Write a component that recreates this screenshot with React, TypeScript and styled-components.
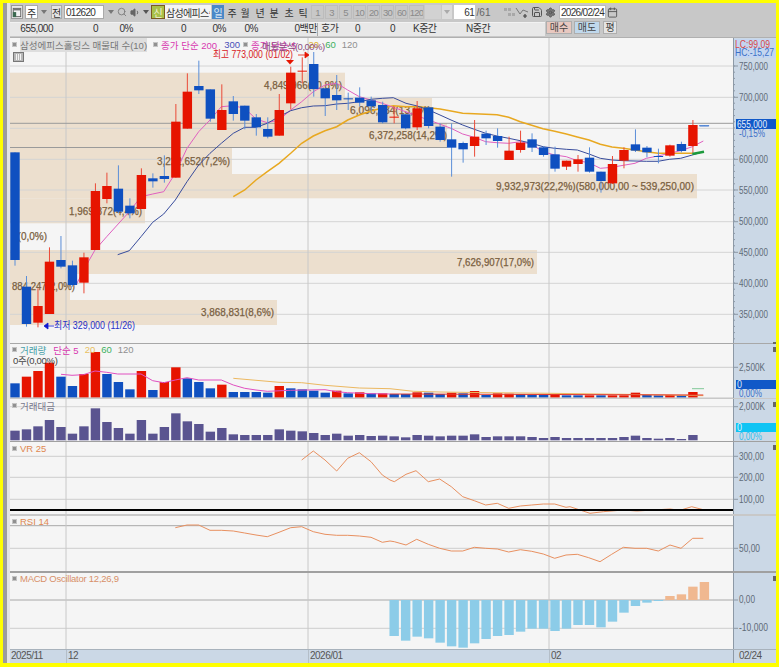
import React from 'react';
import styled, { createGlobalStyle } from 'styled-components';
import { Search, Volume1, Save, Settings, Calendar } from 'lucide-react';

const KR = '"Liberation Sans", "Noto Sans CJK KR", sans-serif';
const RED = '#e61400';
const BLUE = '#0f50c0';
const STEP = 11.49;
const cx = (i: number) => 15 + STEP * i;

type P = [number, number];
// coordinates were read from 3x crops: origin + value / 3
const pts = (ox: number, oy: number, list: P[]) =>
  list.map(([x, y]) => `${(ox + x / 3).toFixed(1)},${(oy + y / 3).toFixed(1)}`).join(' ');

// bodyTop, bodyBottom, wickTop, wickBottom (crop units, y origin 40), up
const candles: [number, number, number, number, number][] = [
  [337, 660, 337, 677, 0], [740, 852, 708, 860, 0], [798, 848, 745, 862, 1], [665, 822, 622, 822, 1],
  [660, 680, 588, 685, 0], [676, 735, 662, 740, 0], [652, 728, 638, 760, 1], [453, 630, 430, 630, 1],
  [438, 477, 398, 490, 1], [446, 515, 376, 520, 0], [497, 520, 475, 535, 0], [405, 507, 385, 507, 1],
  [415, 424, 400, 443, 0], [408, 417, 346, 428, 0], [245, 413, 192, 413, 1], [155, 266, 100, 266, 1],
  [138, 151, 62, 162, 0], [148, 236, 148, 245, 0], [210, 270, 133, 270, 1], [184, 222, 168, 242, 0],
  [197, 242, 197, 268, 0], [232, 262, 222, 287, 0], [267, 290, 232, 295, 0], [210, 287, 162, 287, 1],
  [98, 190, 80, 208, 1], [92, 95, 52, 130, 1], [72, 147, 36, 170, 0], [145, 175, 145, 228, 0],
  [165, 181, 105, 210, 0], [175, 178, 158, 210, 0], [173, 188, 142, 200, 0], [181, 199, 170, 215, 0],
  [195, 247, 185, 250, 0], [230, 233, 200, 250, 1], [223, 265, 223, 268, 0], [205, 262, 183, 270, 1],
  [202, 258, 200, 265, 0], [260, 300, 250, 305, 0], [298, 323, 250, 410, 0], [309, 328, 305, 368, 0],
  [290, 318, 240, 350, 1], [281, 295, 272, 315, 0], [288, 303, 265, 323, 0], [332, 360, 290, 360, 1],
  [308, 330, 272, 338, 1], [298, 323, 280, 336, 0], [322, 345, 318, 350, 0], [343, 386, 320, 395, 0],
  [362, 380, 362, 390, 1], [358, 372, 345, 395, 1], [353, 395, 322, 398, 0], [395, 423, 395, 458, 0],
  [372, 430, 348, 432, 1], [330, 362, 322, 385, 1], [313, 332, 268, 336, 0], [323, 337, 318, 352, 0],
  [348, 351, 326, 370, 0], [316, 347, 314, 350, 1], [312, 333, 305, 337, 0], [255, 318, 240, 340, 1],
  [256, 258, 256, 258, 0],
];

const ma5 =
  pts(0, 40, [[228, 735], [268, 660], [285, 630], [320, 590], [388, 515], [423, 470], [458, 462], [491, 455], [526, 400], [561, 325], [596, 275], [630, 240], [664, 200], [700, 197], [734, 205], [768, 237], [802, 248], [837, 240], [872, 210], [905, 185], [940, 155], [975, 135], [1010, 130], [1043, 150], [1078, 170], [1113, 180], [1147, 190]]) +
  ' ' +
  pts(380, 40, [[160, 245], [213, 265], [248, 282], [283, 292], [317, 305], [351, 308], [386, 310], [421, 305], [455, 313], [489, 335], [524, 345], [559, 350], [592, 362], [627, 368], [661, 385], [696, 382], [730, 376], [765, 370], [799, 355], [834, 348], [868, 340], [902, 332], [937, 320], [970, 303]]);

const ma20 =
  pts(0, 40, [[353, 644], [388, 632], [423, 590], [458, 547], [491, 522], [526, 480], [561, 425], [596, 375], [630, 340], [664, 310], [700, 280], [734, 262], [768, 262], [802, 250], [837, 230], [872, 212], [905, 203], [940, 198], [975, 197], [1010, 192], [1043, 190], [1078, 185], [1113, 178], [1147, 175]]) +
  ' ' +
  pts(380, 40, [[40, 173], [78, 190], [112, 198], [146, 210], [180, 225], [213, 240], [248, 255], [283, 268], [317, 280], [351, 288], [386, 295], [421, 302], [455, 310], [489, 320], [524, 325], [559, 328], [592, 330], [627, 342], [661, 355], [696, 360], [730, 362], [765, 363], [799, 364], [834, 364], [868, 358], [902, 355], [937, 345], [970, 335]]);

const ma60 =
  pts(0, 40, [[700, 470], [734, 450], [768, 420], [802, 395], [837, 370], [872, 340], [905, 310], [940, 288], [975, 272], [1010, 260], [1043, 240], [1078, 225], [1113, 213], [1147, 204]]) +
  ' ' +
  pts(380, 40, [[40, 197], [78, 200], [112, 200], [146, 203], [180, 207], [213, 213], [248, 220], [283, 221], [317, 223], [351, 224], [386, 232], [421, 245], [455, 256], [489, 266], [524, 274], [559, 282], [592, 291], [627, 300], [661, 313], [696, 321], [730, 325], [765, 330], [799, 335], [834, 340], [868, 340], [937, 340]]);

// y0, y1, right edge of each price bucket
const buckets: [number, number, number][] = [
  [72.7, 98, 345], [98, 123, 432], [123, 147.5, 447], [147.5, 174, 232], [174, 198.3, 697],
  [198.3, 223.3, 145], [250, 274, 537], [274, 300, 70], [300, 325, 277],
];

// text, left, right, baseline
const bucketLabels: [string, number, number, number][] = [
  ['4,849,966(10,8%)', 264, 342, 89], ['6,096,884(13,6%)', 350, 431, 114], ['6,372,258(14,2%)', 369, 447, 139],
  ['3,222,652(7,2%)', 157, 230, 165], ['9,932,973(22,2%)(580,000,00 ~ 539,250,00)', 496, 694, 190],
  ['1,969,872(4,4%)', 69, 142, 215], ['0(0,0%)', 12, 47, 240], ['7,626,907(17,0%)', 457, 534, 266],
  ['884,247(2,0%)', 12, 75, 290], ['3,868,831(8,6%)', 201, 274, 316],
];

const volumeTops = [130, 110, 93, 68, 110, 138, 102, 36, 102, 126, 148, 93, 150, 126, 82, 115, 126, 145, 134, 156, 156, 156, 158, 138, 145, 148, 152, 158, 152, 160, 157, 160, 160, 162, 162, 157, 158, 162, 158, 160, 153, 165, 160, 161, 162, 164, 164, 162, 166, 166, 166, 166, 166, 166, 158, 165, 166, 165, 166, 156];
const volumeUp = [0, 1, 1, 1, 0, 0, 1, 1, 0, 0, 0, 1, 0, 1, 1, 0, 0, 0, 1, 0, 0, 0, 0, 1, 0, 0, 0, 0, 1, 0, 1, 0, 1, 0, 0, 1, 0, 0, 1, 0, 1, 0, 1, 1, 0, 0, 0, 1, 0, 0, 1, 0, 1, 1, 1, 0, 0, 1, 0, 1];
const amountTops = [272, 268, 259, 240, 261, 281, 259, 205, 246, 264, 281, 240, 281, 261, 220, 244, 252, 275, 264, 283, 285, 285, 285, 268, 272, 274, 279, 285, 281, 287, 285, 288, 287, 289, 292, 285, 287, 289, 287, 287, 283, 291, 289, 289, 289, 291, 294, 291, 294, 294, 294, 294, 294, 291, 287, 294, 296, 294, 297, 285];
const macdBottoms = [393, 407, 395, 400, 413, 424, 428, 415, 402, 393, 390, 380, 371, 371, 378, 371, 360, 360, 367, 350, 323, 303, 293, 288];
const macdTops = [273, 268, 245, 231];

const volMa5 = pts(0, 340, [[183, 103], [216, 106], [250, 104], [285, 93], [320, 97], [353, 102], [423, 102], [458, 122], [491, 128], [526, 120], [561, 113], [596, 120], [664, 120], [700, 135], [734, 145], [768, 150], [802, 154], [872, 151], [975, 149], [1010, 155], [1043, 158], [1113, 161], [1170, 162]]);
const volMa5Tail = pts(390, 340, [[0, 162], [300, 163], [940, 165]]);
const volMa20 =
  pts(0, 340, [[700, 115], [768, 121], [837, 127], [905, 128], [975, 136], [1078, 144]]) +
  ' ' +
  pts(390, 340, [[0, 146], [70, 154], [150, 156], [300, 158], [480, 160], [700, 163], [940, 167]]);

const vrLine =
  pts(0, 340, [[905, 360], [940, 333], [975, 360], [1010, 393], [1043, 355], [1078, 338], [1113, 365], [1147, 405], [1170, 420]]) +
  ' ' +
  pts(390, 340, [[13, 425], [48, 403], [78, 392], [115, 425], [149, 417], [184, 440], [218, 470], [253, 482], [287, 495], [322, 490], [356, 505], [391, 498], [425, 495], [460, 492], [494, 492], [528, 502]]) +
  ' ' +
  pts(390, 505, [[540, 5], [600, 25], [640, 20], [700, 15], [740, 18], [840, 12], [870, 16], [905, 5], [940, 14]]);

const rsiLine =
  pts(0, 505, [[526, 68], [561, 60], [596, 60], [630, 76], [664, 76], [700, 78], [734, 84], [768, 90], [802, 95], [837, 82], [872, 68], [905, 65], [940, 80], [975, 88], [1010, 91], [1043, 91], [1078, 93], [1113, 97], [1147, 112], [1170, 108]]) +
  ' ' +
  pts(390, 505, [[13, 110], [48, 120], [80, 103], [115, 118], [149, 130], [184, 138], [218, 138], [253, 127], [287, 130], [322, 132], [356, 141], [391, 134], [425, 139], [460, 147], [494, 160], [528, 150], [562, 148], [596, 158], [630, 170], [665, 148], [700, 127], [735, 130], [770, 130], [805, 138], [840, 120], [873, 130], [908, 100], [940, 100]]);

const GlobalStyle = createGlobalStyle`
  html, body { margin: 0; padding: 0; background: #ffff00; }
`;

const Frame = styled.div`
  width: 779px;
  height: 667px;
  box-sizing: border-box;
  border-style: solid;
  border-color: #ffff00;
  border-width: 3px 3px 4px 3px;
  display: flex;
  font-family: ${KR};
  overflow: hidden;
`;
const SideStrip = styled.div`
  width: 7px;
  background: linear-gradient(90deg, #9c9c9c 0 4px, #e4e4e4 4px);
`;
const Column = styled.div`
  flex: 1;
  display: flex;
  flex-direction: column;
  min-width: 0;
`;
const ToolRow = styled.div`
  height: 18px;
  display: flex;
  align-items: center;
  background: #c8c8c8;
  font-size: 10px;
  color: #333;
`;
const Tool = styled.div<{ $w: number; $ml?: number; $bg?: string; $color?: string; $line?: string }>`
  width: ${(p) => p.$w}px;
  margin-left: ${(p) => p.$ml ?? 0}px;
  height: 14px;
  flex: none;
  box-sizing: border-box;
  display: flex;
  align-items: center;
  justify-content: center;
  background: ${(p) => p.$bg ?? 'transparent'};
  color: ${(p) => p.$color ?? '#333'};
  border: ${(p) => (p.$line ? `1px solid ${p.$line}` : 'none')};
  white-space: nowrap;
  overflow: hidden;
`;
const Field = styled(Tool)<{ $end?: boolean }>`
  justify-content: ${(p) => (p.$end ? 'flex-end' : 'flex-start')};
  padding: 0 1px;
  letter-spacing: -0.7px;
`;
const Period = styled(Tool)`
  letter-spacing: -0.8px;
  font-size: 9.5px;
`;
const Arrow = styled.span<{ $c?: string }>`
  width: 0;
  height: 0;
  border-left: 3px solid transparent;
  border-right: 3px solid transparent;
  border-top: 4px solid ${(p) => p.$c ?? '#777'};
`;
const InfoRow = styled.div`
  height: 16px;
  display: flex;
  background: #c8c8c8;
  font-size: 10px;
  color: #333;
`;
const InfoCells = styled.div`
  width: 535px;
  height: 13px;
  margin-top: 0.5px;
  display: flex;
  background: #e8e8e8;
  border-top: 1px solid #f2f2f2;
`;
const Cell = styled.div<{ $w: number; $left?: boolean; $sep?: boolean; $pad?: number }>`
  width: ${(p) => p.$w}px;
  flex: none;
  box-sizing: border-box;
  line-height: 12px;
  text-align: ${(p) => (p.$left ? 'left' : 'right')};
  padding-left: ${(p) => p.$pad ?? (p.$left ? 3 : 0)}px;
  border-left: ${(p) => (p.$sep ? '1px solid #aaa' : 'none')};
  letter-spacing: -0.5px;
  white-space: nowrap;
`;
const TradeButton = styled.div<{ $bg: string; $w: number; $ml: number }>`
  width: ${(p) => p.$w}px;
  margin-left: ${(p) => p.$ml}px;
  height: 13px;
  background: ${(p) => p.$bg};
  border: 1px solid #aeaeae;
  box-sizing: border-box;
  font-size: 10px;
  line-height: 11px;
  text-align: center;
  color: #444;
`;
const Pane = styled.div<{ $h: number; $line: string; $lw: number }>`
  height: ${(p) => p.$h}px;
  flex: none;
  box-sizing: border-box;
  display: flex;
  border-top: ${(p) => p.$lw}px solid ${(p) => p.$line};
`;
const Plot = styled.div`
  width: 723px;
  flex: none;
  position: relative;
  background: #f5f5f5;
`;
const Axis = styled.div`
  width: 43px;
  flex: none;
  position: relative;
  background: #cbd8e6;
  border-left: 1px solid #8d99a6;
  box-sizing: border-box;
`;
const ChartSvg = styled.svg`
  display: block;
  width: 100%;
  height: 100%;
  text {
    font-family: ${KR};
    font-size: 10.5px;
  }
`;
const Legend = styled.div<{ $top: number }>`
  position: absolute;
  left: 2px;
  top: ${(p) => p.$top}px;
  height: 11px;
  display: flex;
  align-items: center;
  font-size: 9.5px;
  white-space: nowrap;
`;
const Dot = styled.i<{ $ml?: number }>`
  width: 5px;
  height: 5px;
  box-sizing: border-box;
  margin: 0 3px 0 ${(p) => p.$ml ?? 0}px;
  background: #909090;
  border: 1px solid #c4c4c4;
  flex: none;
`;
const Tag = styled.span<{ $c: string; $ml?: number; $bg?: string; $tight?: boolean }>`
  color: ${(p) => p.$c};
  margin-left: ${(p) => p.$ml ?? 0}px;
  background: ${(p) => p.$bg ?? 'transparent'};
  letter-spacing: ${(p) => (p.$tight ? '-0.25px' : '0')};
`;
const Overlap = styled.span`
  position: absolute;
  left: 250px;
  top: 0;
  font-size: 9.5px;
  color: #8a4f80;
  letter-spacing: -0.5px;
`;
const SubValue = styled.div`
  position: absolute;
  left: 3px;
  top: 9px;
  font-size: 9.5px;
  letter-spacing: -0.3px;
  color: #444;
`;
const PaneMark = styled.i`
  position: absolute;
  right: 0;
  width: 3px;
  height: 5px;
  background: #666;
`;
const BarsButton = styled.div`
  position: absolute;
  left: 3px;
  top: 14px;
  width: 11px;
  height: 10px;
  box-sizing: border-box;
  background: #b8b8b8;
  border: 1px solid #777;
  display: flex;
  gap: 1px;
  padding: 1px 2px;
`;
const BarsTick = styled.i`
  flex: 1;
  background: #f4f4f4;
`;
const DateRow = styled.div`
  height: 14px;
  flex: none;
  display: flex;
  background: #cbd8e6;
  border-top: 1px solid #a8b2bc;
  box-sizing: border-box;
  font-size: 10px;
  color: #555;
  line-height: 12px;
  letter-spacing: -0.5px;
`;
const DatePlot = styled.div`
  width: 723px;
  flex: none;
  display: grid;
  grid-template-columns: 56px 242px 241px 1fr;
`;
const DateTick = styled.span`
  padding-left: 1px;
  border-left: 1px solid #b4bec8;
`;
const DateStart = styled.span`
  padding-left: 1px;
`;
const DateEnd = styled.div`
  flex: 1;
  padding-left: 5px;
  border-left: 1px solid #8d99a6;
`;

const Candle = ({ i }: { i: number }) => {
  const [top, bottom, wickTop, wickBottom, up] = candles[i];
  const y = (v: number) => 40 + v / 3;
  const x = cx(i);
  const body = up ? RED : BLUE;
  const wick = up ? '#ea4a38' : '#5a8ed8';
  return (
    <g>
      <line x1={x} x2={x} y1={y(wickTop)} y2={y(wickBottom)} stroke={wick} strokeWidth={1} />
      <rect x={x - 4.7} y={y(top)} width={9.4} height={Math.max(y(bottom) - y(top), 1)} fill={body} />
    </g>
  );
};

const Bars = ({ base, tops, colour }: { base: number; tops: number[]; colour: (i: number) => string }) => (
  <>
    {tops.map((t, i) => (
      <rect key={i} x={cx(i) - 4.7} y={t} width={9.4} height={base - t} fill={colour(i)} />
    ))}
  </>
);

const HLine = ({ y, c = '#cdcdcd', w = 1 }: { y: number; c?: string; w?: number }) => (
  <line x1={10} x2={733} y1={y} y2={y} stroke={c} strokeWidth={w} />
);

const VLines = ({ y1, y2 }: { y1: number; y2: number }) => (
  <>
    {[66, 308, 549].map((x) => (
      <line key={x} x1={x} x2={x} y1={y1} y2={y2} stroke="#c8c8c8" strokeWidth={1} />
    ))}
  </>
);

const PlotBox = ({ top, h, children }: { top: number; h: number; children: React.ReactNode }) => (
  <ChartSvg viewBox={`10 ${top} 723 ${h}`} preserveAspectRatio="none">
    {children}
  </ChartSvg>
);

// w: printed width of the label, the reference font is narrower than ours
const AxisText = ({ y, t, w, c = '#5f6b78', x = 739 }: { y: number; t: string; w: number; c?: string; x?: number }) => (
  <text x={x} y={y + 3.6} fill={c} textLength={w} lengthAdjust="spacingAndGlyphs">
    {t}
  </text>
);

const AxisBox = ({ top, h, children }: { top: number; h: number; children: React.ReactNode }) => (
  <ChartSvg viewBox={`734 ${top} 42 ${h}`} preserveAspectRatio="none">
    {children}
  </ChartSvg>
);

const Tick = ({ y, w = 5 }: { y: number; w?: number }) => (
  <line x1={733} x2={733 + w} y1={y} y2={y} stroke="#8d99a6" strokeWidth={1} />
);

const PRICE_TICKS: [number, string][] = [
  [66, '750,000'], [97.3, '700,000'], [159.3, '600,000'], [190, '550,000'], [221.7, '500,000'],
  [252.3, '450,000'], [283.3, '400,000'], [314.3, '350,000'],
];

const AddLineIcon = () => (
  <svg width="14" height="13" viewBox="0 0 14 13" fill="none">
    <polyline points="1,2 5,8 8,4 13,6" stroke="#777" strokeWidth="1" />
    <path d="M10 8v4M8 10h4" stroke="#444" strokeWidth="1.2" />
  </svg>
);
const DotsIcon = () => (
  <svg width="12" height="12" viewBox="0 0 12 12" fill="#a8a8a8">
    <rect x="1" y="2" width="3" height="3" />
    <rect x="5" y="2" width="3" height="3" />
    <rect x="5" y="7" width="3" height="3" />
    <rect x="9" y="7" width="3" height="3" />
  </svg>
);
const WindowIcon = () => (
  <svg width="12" height="13" viewBox="0 0 12 13" fill="none">
    <rect x="1.5" y="1.5" width="9" height="10" fill="#f2f2f2" stroke="#555" />
    <rect x="1.5" y="1.5" width="9" height="2.5" fill="#777" />
    <rect x="1" y="6" width="4" height="6" fill="#3c6a50" />
  </svg>
);
const FlagIcon = () => (
  <svg width="9" height="13" viewBox="0 0 9 13">
    <polygon points="0,3 9,0 9,6" fill="#1c8a38" />
    <polygon points="0,3 9,6 9,8 0,8" fill="#f4f4f4" />
    <polygon points="0,8 9,8 9,13 0,13" fill="#d8261c" />
  </svg>
);

const App = () => {
  return (
    <>
      <GlobalStyle />
      <Frame>
        <SideStrip />
        <Column>
          <ToolRow>
            <Tool $w={12} $ml={1} $bg="#e8e8e8" $line="#999"><WindowIcon /></Tool>
            <Tool $w={13} $ml={2} $bg="#fff" $line="#aaa">주</Tool>
            <Tool $w={9} $ml={1}><Arrow /></Tool>
            <Tool $w={11} $ml={3} $bg="#e4e4e4" $line="#aaa">전</Tool>
            <Field $w={40} $ml={2} $bg="#fff" $line="#aaa">012620</Field>
            <Tool $w={9} $ml={2}><Arrow /></Tool>
            <Tool $w={12} $ml={1}><Search size={10} color="#777" /></Tool>
            <Tool $w={12} $ml={1}><Volume1 size={11} color="#666" fill="#666" /></Tool>
            <Tool $w={7} $ml={1}><Arrow $c="#555" /></Tool>
            <Tool $w={14} $ml={2} $bg="#a8c048" $color="#f2f2d8" $line="#7a5a20">신</Tool>
            <Field $w={46} $bg="#f4f4f4">삼성에피스<FlagIcon /></Field>
            <Tool $w={12} $ml={1} $bg="#4a88c8" $color="#dce8f4">일</Tool>
            <Tool $w={12} $ml={2}>주</Tool>
            <Tool $w={12} $ml={1}>월</Tool>
            <Tool $w={12} $ml={3}>년</Tool>
            <Tool $w={12} $ml={2}>분</Tool>
            <Tool $w={12} $ml={3}>초</Tool>
            <Tool $w={12} $ml={2}>틱</Tool>
            {['1', '3', '5', '10', '20', '30', '60', '120'].map((t) => (
              <Period key={t} $w={t === '120' ? 15 : 13} $ml={t === '1' ? 2 : 1} $color="#8a8a8a" $line="#bcbcbc">{t}</Period>
            ))}
            <Tool $w={16} $ml={1} $bg="#d2d2d2" />
            <Tool $w={10} $ml={1} $bg="#dcdcdc"><Arrow $c="#aaa" /></Tool>
            <Field $w={21} $ml={2} $bg="#fff" $end>61</Field>
            <Tool $w={17} $color="#666">/61</Tool>
            <Tool $w={13} $ml={10}><DotsIcon /></Tool>
            <Tool $w={14}><AddLineIcon /></Tool>
            <Tool $w={13} $ml={1}><Save size={12} color="#555" /></Tool>
            <Tool $w={12} $ml={1}><Settings size={11} color="#555" fill="#777" /></Tool>
            <Field $w={47} $ml={3} $bg="#fff" $line="#bbb">2026/02/24</Field>
            <Tool $w={12}><Calendar size={11} color="#555" /></Tool>
          </ToolRow>
          <InfoRow>
            <InfoCells>
              <Cell $w={43}>655,000</Cell>
              <Cell $w={45}>0</Cell>
              <Cell $w={35}>0%</Cell>
              <Cell $w={53}>0</Cell>
              <Cell $w={40}>0%</Cell>
              <Cell $w={32}>0%</Cell>
              <Cell $w={59}>0백만</Cell>
              <Cell $w={24} $left $sep>호가</Cell>
              <Cell $w={19}>0</Cell>
              <Cell $w={35}>0</Cell>
              <Cell $w={71} $left $pad={18}>K중간</Cell>
              <Cell $w={79} $left $pad={0}>N중간</Cell>
            </InfoCells>
            <TradeButton $bg="#e8c8c0" $w={26} $ml={1}>매수</TradeButton>
            <TradeButton $bg="#c0d8ec" $w={26} $ml={2}>매도</TradeButton>
            <TradeButton $bg="#e4e4e4" $w={14} $ml={3}>평</TradeButton>
          </InfoRow>

          <Pane $h={306} $line="#b0b0b0" $lw={1}>
            <Plot>
              <PlotBox top={38} h={305}>
                {buckets.map(([y0, y1, right]) => (
                  <rect key={y0} x={10} y={y0} width={right - 10} height={y1 - y0} fill="#ecdfce" />
                ))}
                {[66, 97.3, 128.3, 159.3, 190, 221.7, 252.3, 283.3, 314.3].map((y) => (
                  <HLine key={y} y={y} c="#d4d4d4" />
                ))}
                <VLines y1={38} y2={343} />
                <HLine y={123.3} c="#9a9a9a" />
                <line x1={10} x2={447} y1={147.5} y2={147.5} stroke="#9a9a9a" strokeWidth={1} />
                {bucketLabels.map(([t, x0, x1, y]) => (
                  <text key={t} x={x0} y={y} fill="#7a6040" stroke="#7a6040" strokeWidth={0.25} textLength={x1 - x0} lengthAdjust="spacingAndGlyphs">
                    {t}
                  </text>
                ))}
                <polyline points={ma60} fill="none" stroke="#e8a820" strokeWidth={1.5} />
                <polyline points={ma5} fill="none" stroke="#e060c0" strokeWidth={1} />
                <polyline points={ma20} fill="none" stroke="#384c9c" strokeWidth={1} />
                {candles.map((_, i) => (
                  <Candle key={i} i={i} />
                ))}
                <line x1={699} x2={708} y1={125.7} y2={125.7} stroke="#5a8ed8" strokeWidth={1} />
                <polyline points={pts(380, 40, [[937, 342], [972, 335]])} fill="none" stroke="#1c9a3c" strokeWidth={2.4} />
                <text x={213} y={58} fill="#d8201c" textLength={80} lengthAdjust="spacingAndGlyphs">최고 773,000 (01/02)</text>
                <polygon points="286,60 294,60 290,64.5" fill={RED} />
                <path d="M298 55h7v-3l4 3-4 3v-3" fill={RED} stroke={RED} strokeWidth={0.8} />
                <text x={54} y={329} fill="#2830c8" textLength={81} lengthAdjust="spacingAndGlyphs">최저 329,000 (11/26)</text>
                <path d="M54 326h-6v-3l-4 3 4 3v-3" fill="#1018d0" stroke="#1018d0" strokeWidth={0.8} />
              </PlotBox>
              <Legend $top={1}>
                <Dot />
                <Tag $c="#777" $bg="#dedede">삼성에피스홀딩스 매물대 수(10)</Tag>
                <Dot $ml={6} />
                <Tag $c="#d838b0">종가 단순 200</Tag>
                <Tag $c="#4a50b8" $ml={7}>300</Tag>
                <Dot $ml={3} />
                <Tag $c="#d838b0">종가 단순 5</Tag>
                <Tag $c="#e0b030" $ml={12}>20</Tag>
                <Tag $c="#3cb060" $ml={6}>60</Tag>
                <Tag $c="#909090" $ml={6}>120</Tag>
                <Overlap>매물분석(0,00%)</Overlap>
              </Legend>
              <BarsButton>
                <BarsTick />
                <BarsTick />
                <BarsTick />
              </BarsButton>
            </Plot>
            <Axis>
              <AxisBox top={38} h={305}>
                <rect x={734} y={39} width={42} height={19} fill="#c4d6f0" />
                <AxisText x={735} y={44} t="LC:99,09" w={35} c="#d84848" />
                <AxisText x={735} y={52.5} t="HC:-15,27" w={39} c="#3c70c8" />
                {PRICE_TICKS.map(([y, t]) => (
                  <g key={t}>
                    <Tick y={y} />
                    <AxisText y={y} t={t} w={29} />
                  </g>
                ))}
                {Array.from({ length: 46 }, (_, k) => 66 + k * 6.2).map((y) => (
                  <Tick key={y} y={y} w={2} />
                ))}
                <rect x={736} y={119} width={40} height={10} fill="#1058c8" />
                <AxisText x={737} y={124} t="655,000" w={30} c="#e8f0fa" />
                <AxisText y={133.5} t="-0,15%" w={26} c="#3c70c8" />
              </AxisBox>
              <PaneMark style={{ top: 304 }} />
            </Axis>
          </Pane>

          <Pane $h={55} $line="#a8a8a8" $lw={1}>
            <Plot>
              <PlotBox top={344} h={54}>
                <HLine y={367.3} />
                <VLines y1={344} y2={398} />
                <Bars base={397.7} tops={volumeTops.map((t) => 340 + t / 3)} colour={(i) => (volumeUp[i] ? RED : BLUE)} />
                <HLine y={398} c="#c4c4c4" />
                <polyline points={volMa20} fill="none" stroke="#ecb860" strokeWidth={1} />
                <polyline points={volMa5} fill="none" stroke="#e050c0" strokeWidth={1} />
                <polyline points={volMa5Tail} fill="none" stroke="#e23a30" strokeWidth={1} />
                <line x1={692} x2={704} y1={388.7} y2={388.7} stroke="#80c898" strokeWidth={1} />
              </PlotBox>
              <Legend $top={0}>
                <Dot />
                <Tag $c="#48a0a8">거래량</Tag>
                <Tag $c="#d838b0" $ml={7}>단순 5</Tag>
                <Tag $c="#e8c060" $ml={6}>20</Tag>
                <Tag $c="#3cb060" $ml={6}>60</Tag>
                <Tag $c="#909090" $ml={6}>120</Tag>
              </Legend>
              <SubValue>0주(0,00%)</SubValue>
            </Plot>
            <Axis>
              <AxisBox top={344} h={54}>
                <Tick y={367.3} />
                <AxisText y={367} t="2,500K" w={26} />
                <rect x={736} y={380} width={40} height={9} fill="#1058c8" />
                <AxisText x={737} y={384.5} t="0" w={5} c="#d8e4f4" />
                <AxisText x={739} y={393.5} t="0,00%" w={23} c="#3c70c8" />
              </AxisBox>
              <PaneMark style={{ top: 3 }} />
            </Axis>
          </Pane>

          <Pane $h={43} $line="#c8c8c8" $lw={1}>
            <Plot>
              <PlotBox top={399} h={42}>
                <HLine y={406.7} c="#d4d4d4" />
                <VLines y1={399} y2={441} />
                <Bars base={440.3} tops={amountTops.map((t) => 340 + t / 3)} colour={() => '#5a5490'} />
              </PlotBox>
              <Legend $top={1}>
                <Dot />
                <Tag $c="#78788c">거래대금</Tag>
              </Legend>
            </Plot>
            <Axis>
              <AxisBox top={399} h={42}>
                <Tick y={406.7} />
                <AxisText y={406} t="2,000K" w={26} />
                <rect x={736} y={423} width={40} height={9} fill="#10c4f4" />
                <AxisText x={737} y={427.5} t="0" w={5} c="#d8f0fa" />
                <AxisText x={739} y={436} t="0,00%" w={23} c="#30c0f0" />
              </AxisBox>
              <PaneMark style={{ top: 3 }} />
            </Axis>
          </Pane>

          <Pane $h={73} $line="#a0a0a0" $lw={1}>
            <Plot>
              <PlotBox top={442} h={72}>
                {[456.3, 477.3, 499.3].map((y) => (
                  <HLine key={y} y={y} />
                ))}
                <VLines y1={442} y2={514} />
                <polyline points={vrLine} fill="none" stroke="#e89060" strokeWidth={1} />
                <HLine y={510} c="#000" w={2} />
              </PlotBox>
              <Legend $top={1}>
                <Dot />
                <Tag $c="#e08850">VR 25</Tag>
              </Legend>
            </Plot>
            <Axis>
              <AxisBox top={442} h={72}>
                <Tick y={456.3} />
                <Tick y={477.3} />
                <Tick y={499.3} />
                <AxisText y={456} t="300,00" w={25} />
                <AxisText y={477} t="200,00" w={25} />
                <AxisText y={499} t="100,00" w={25} />
              </AxisBox>
              <PaneMark style={{ top: 3 }} />
            </Axis>
          </Pane>

          <Pane $h={57} $line="#c8c8c8" $lw={2}>
            <Plot>
              <PlotBox top={516} h={55}>
                <HLine y={525.7} c="#a8a8a8" />
                <HLine y={548.3} />
                <VLines y1={516} y2={571} />
                <polyline points={rsiLine} fill="none" stroke="#e89060" strokeWidth={1} />
              </PlotBox>
              <Legend $top={0}>
                <Dot />
                <Tag $c="#e08850">RSI 14</Tag>
              </Legend>
            </Plot>
            <Axis>
              <AxisBox top={516} h={55}>
                <Tick y={548.3} />
                <AxisText y={548} t="50,00" w={21} />
              </AxisBox>
            </Axis>
          </Pane>

          <Pane $h={78} $line="#a0a0a0" $lw={2}>
            <Plot>
              <PlotBox top={573} h={76}>
                <HLine y={600} c="#a8a8a8" />
                <HLine y={628.3} />
                <VLines y1={573} y2={649} />
                {macdBottoms.map((b, k) => {
                  const bottom = 505 + b / 3;
                  return <rect key={k} x={cx(k + 33) - 4.7} y={600} width={9.4} height={bottom - 600} fill="#8ccce8" />;
                })}
                {macdTops.map((t, k) => {
                  const top = 505 + t / 3;
                  return <rect key={k} x={cx(k + 57) - 4.7} y={top} width={9.4} height={600 - top} fill="#f0b890" />;
                })}
              </PlotBox>
              <Legend $top={0}>
                <Dot />
                <Tag $c="#d89068" $tight>MACD Oscillator 12,26,9</Tag>
              </Legend>
            </Plot>
            <Axis>
              <AxisBox top={573} h={76}>
                <Tick y={600} />
                <Tick y={628.3} />
                <AxisText y={599} t="0,00" w={16} />
                <AxisText y={627.5} t="-10,000" w={29} />
              </AxisBox>
              <PaneMark style={{ top: 3 }} />
            </Axis>
          </Pane>

          <DateRow>
            <DatePlot>
              <DateStart>2025/11</DateStart>
              <DateTick>12</DateTick>
              <DateTick>2026/01</DateTick>
              <DateTick>02</DateTick>
            </DatePlot>
            <DateEnd>02/24</DateEnd>
          </DateRow>
        </Column>
      </Frame>
    </>
  );
};

export default App;
